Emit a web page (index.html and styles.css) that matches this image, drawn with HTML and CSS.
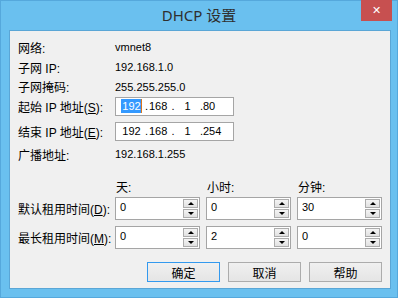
FILE: index.html
```html
<!DOCTYPE html>
<html lang="zh-CN">
<head>
    <meta charset="UTF-8">
    <title>DHCP 设置</title>
    <link rel="stylesheet" href="styles.css">
</head>
<body>
    <div class="window">
        <div class="titlebar">
            <span></span>
            <span class="title">DHCP 设置</span>
            <span class="close">✕</span>
        </div>
        <div class="client">
            <div class="row r1"><span class="label">网络:</span><span class="value">vmnet8</span></div>
            <div class="row r2"><span class="label">子网 IP:</span><span class="value">192.168.1.0</span></div>
            <div class="row r3"><span class="label">子网掩码:</span><span class="value">255.255.255.0</span></div>
            <div class="row r4">
                <span class="label">起始 IP 地址(<u>S</u>):</span>
                <div class="ipbox">
                    <span class="f f1"><span class="sel">192</span></span><span class="d d1">.</span>
                    <span class="f f2">168</span><span class="d d2">.</span>
                    <span class="f f3">1</span><span class="d d3">.</span>
                    <span class="f f4">80</span>
                </div>
            </div>
            <div class="row r5">
                <span class="label">结束 IP 地址(<u>E</u>):</span>
                <div class="ipbox">
                    <span class="f f1">192</span><span class="d d1">.</span>
                    <span class="f f2">168</span><span class="d d2">.</span>
                    <span class="f f3">1</span><span class="d d3">.</span>
                    <span class="f f4">254</span>
                </div>
            </div>
            <div class="row r6"><span class="label">广播地址:</span><span class="value">192.168.1.255</span></div>

            <div class="lease">
                <span></span>
                <span class="head">天:</span>
                <span class="head">小时:</span>
                <span class="head">分钟:</span>

                <span class="label">默认租用时间(<u>D</u>):</span>
                <div class="spin"><span class="num">0</span><span class="arrows"><i class="up"></i><i class="down"></i></span></div>
                <div class="spin"><span class="num">0</span><span class="arrows"><i class="up"></i><i class="down"></i></span></div>
                <div class="spin"><span class="num">30</span><span class="arrows"><i class="up"></i><i class="down"></i></span></div>

                <span class="label">最长租用时间(<u>M</u>):</span>
                <div class="spin"><span class="num">0</span><span class="arrows"><i class="up"></i><i class="down"></i></span></div>
                <div class="spin"><span class="num">2</span><span class="arrows"><i class="up"></i><i class="down"></i></span></div>
                <div class="spin"><span class="num">0</span><span class="arrows"><i class="up"></i><i class="down"></i></span></div>
            </div>

            <div class="buttons">
                <button class="btn default">确定</button>
                <button class="btn">取消</button>
                <button class="btn">帮助</button>
            </div>
        </div>
    </div>
</body>
</html>
```

FILE: styles.css
```css
body {
    margin: 0;
    font-family: "Liberation Sans", "Noto Sans CJK SC", sans-serif;
    font-size: 12px;
    color: #000;
}

.window {
    width: 398px;
    height: 298px;
    box-sizing: border-box;
    background-color: #6ac0ef;
    border: 1px solid #55a8dc;
    display: flex;
    flex-direction: column;
}

.titlebar {
    height: 29px;
    display: grid;
    grid-template-columns: 1fr auto 1fr;
    align-items: start;
}

.title {
    font-family: "Noto Sans", "Noto Sans CJK SC", sans-serif;
    font-size: 15px;
    color: #2f2f2f;
    line-height: 28px;
}

.close {
    justify-self: end;
    margin-top: -1px;
    margin-right: 5px;
    width: 31px;
    height: 21px;
    background-color: #c75050;
    color: #fff;
    font-family: "DejaVu Sans", sans-serif;
    font-size: 11px;
    font-weight: bold;
    text-align: center;
    line-height: 21px;
}

.client {
    margin: 0 6px 8px 8px;
    flex: 1;
    background-color: #f0f0f0;
    border: 1px solid #5aa6d6;
    padding: 6px 0 0 8px;
}

.row {
    display: flex;
    align-items: center;
    height: 20px;
}

.r3 {
    height: 19px;
}

.r5 {
    margin-top: 5px;
}

.r6 {
    margin-top: 3px;
}

.label {
    width: 97px;
    white-space: nowrap;
}

.value {
    font-size: 11px;
}

.ipbox {
    width: 119px;
    height: 19px;
    box-sizing: border-box;
    border: 1px solid #a5a5a5;
    background-color: #fff;
    display: flex;
    align-items: center;
    padding-left: 3px;
    font-size: 11px;
}

.f {
    text-align: center;
}

.f1 {
    width: 25px;
}

.f2 {
    width: 18px;
}

.f3 {
    width: 17px;
}

.f4 {
    text-align: left;
}

.d {
    text-align: center;
}

.d1 {
    width: 5px;
}

.d2 {
    width: 12px;
}

.d3 {
    width: 7px;
    text-align: right;
}

.sel {
    background-color: #3399ff;
    color: #fff;
    padding: 1px 0 1px 1px;
    border-right: 1px solid #d9761c;
}

.lease {
    margin-top: 9px;
    display: grid;
    grid-template-columns: 91px 85px 85px 85px;
    grid-template-rows: 18px 23px 23px;
    column-gap: 6px;
    row-gap: 6px;
    align-items: center;
}

.lease .head {
    padding-left: 1px;
    align-self: center;
}

.lease .head:nth-child(-n+4) {
    margin-bottom: -8px;
}

.spin {
    height: 23px;
    box-sizing: border-box;
    border: 1px solid #a5a5a5;
    background-color: #fff;
    display: flex;
    justify-content: space-between;
}

.num {
    padding: 3px 0 0 4px;
    font-size: 11px;
}

.arrows {
    display: flex;
    flex-direction: column;
    gap: 1px;
    margin: 1px 1px 0 0;
}

.arrows i {
    width: 15px;
    height: 9px;
    box-sizing: border-box;
    border: 1px solid #acacac;
    background: linear-gradient(#f4f4f4, #e1e1e1);
    display: flex;
    justify-content: center;
    align-items: center;
}

.up::after {
    content: "";
    border-left: 3px solid transparent;
    border-right: 3px solid transparent;
    border-bottom: 3px solid #000;
}

.down::after {
    content: "";
    border-left: 3px solid transparent;
    border-right: 3px solid transparent;
    border-top: 3px solid #000;
}

.buttons {
    margin-top: 13px;
    display: flex;
    justify-content: flex-end;
    gap: 8px;
    padding-right: 8px;
}

.btn {
    width: 73px;
    height: 20px;
    padding: 0;
    font-family: "Noto Sans CJK SC", sans-serif;
    font-size: 12px;
    color: #000;
    background: linear-gradient(#f0f0f0, #e5e5e5);
    border: 1px solid #acacac;
}

.default {
    border-color: #3399ee;
}
```
